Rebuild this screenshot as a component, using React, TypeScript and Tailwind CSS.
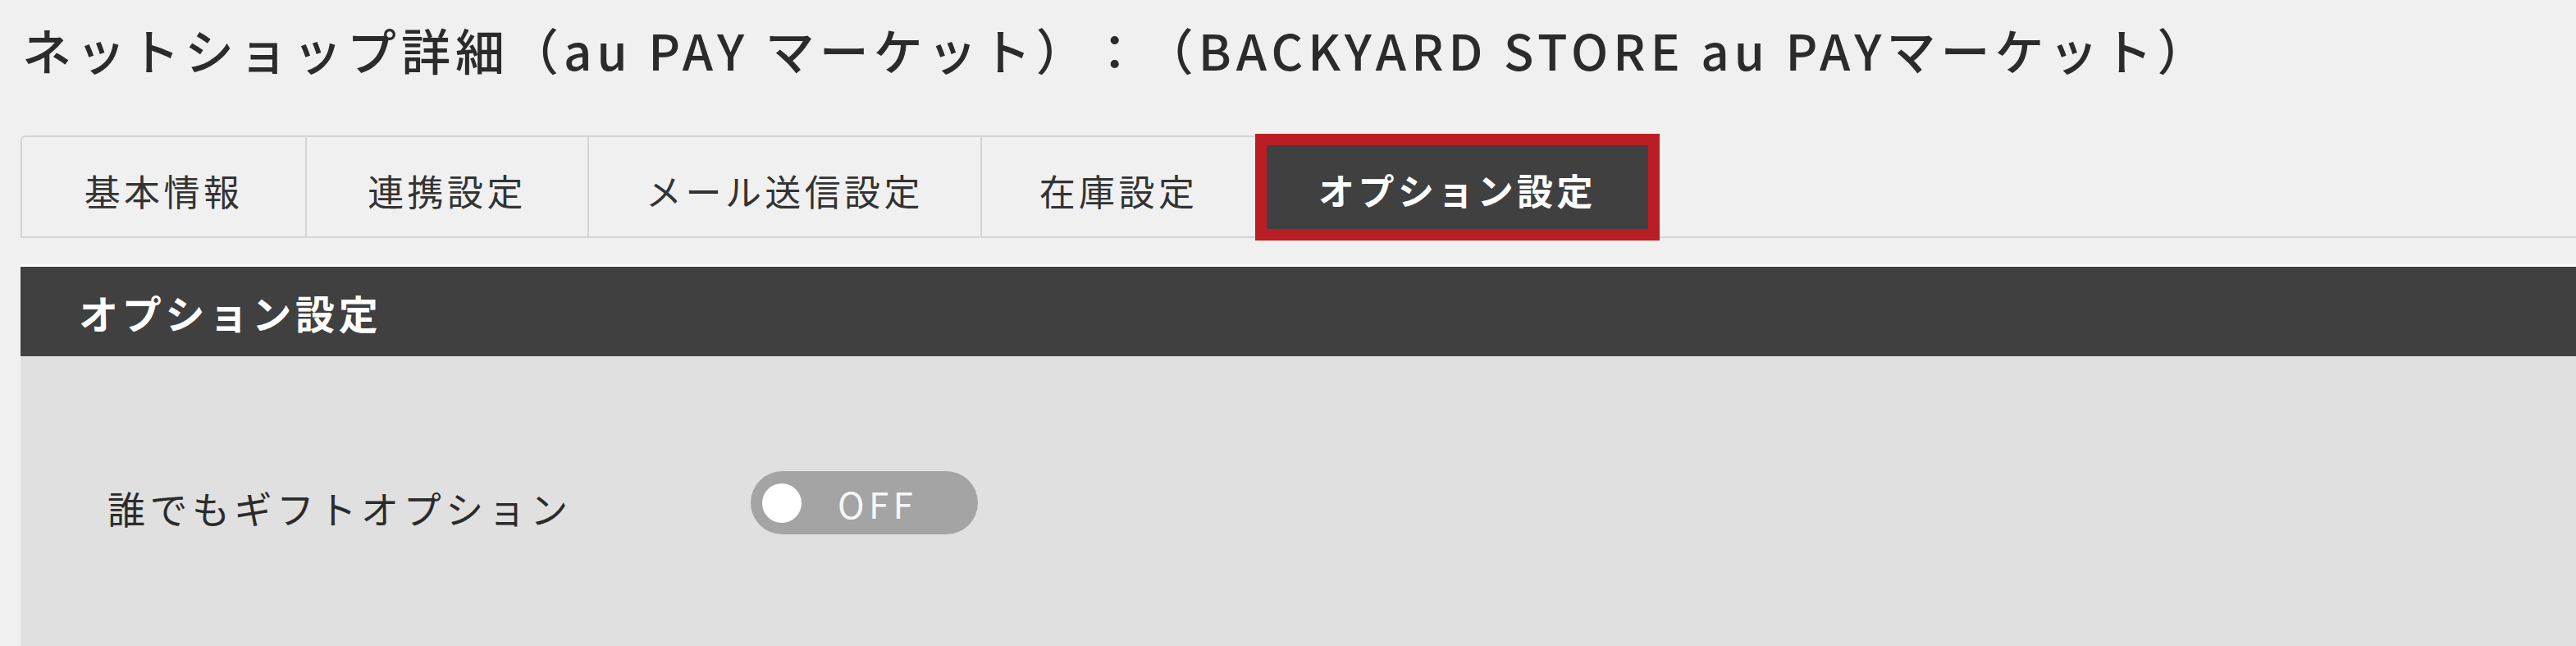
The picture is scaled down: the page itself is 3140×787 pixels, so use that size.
import React, { useState } from 'react';

const tabs = [
    { label: '基本情報', width: 'w-[347px]' },
    { label: '連携設定', width: 'w-[344px]' },
    { label: 'メール送信設定', width: 'w-[479px]' },
    { label: '在庫設定', width: 'w-[335px]' },
];

export default function App() {
    const [giftOn, setGiftOn] = useState(false);

    return (
        <div className="min-h-[787px] w-full overflow-hidden bg-[#f0f0f0] font-['Noto_Sans_CJK_JP','Noto_Sans',sans-serif] text-[#333333] [text-spacing-trim:space-all]">
            {/* Page title */}
            <h1 className="pt-[20px] pl-[27px] text-[60px] leading-[80px] font-medium tracking-[0.1em] whitespace-nowrap text-[#2b2b2b]">
                ネットショップ詳細（au PAY マーケット）：（BACKYARD STORE au PAYマーケット）
            </h1>

            {/* Tabs */}
            <div className="mt-[65px] ml-[25px] flex border-b-2 border-[#d4d4d4]">
                {tabs.map((tab, i) => (
                    <button
                        key={tab.label}
                        className={`${tab.width} h-[123px] flex items-center justify-center pt-[8px] border-t-2 border-l-2 border-[#d4d4d4] bg-[#f0f0f0] text-[44px] tracking-[0.1em] text-[#333333] ${i === 0 ? 'rounded-tl-[6px]' : ''}`}
                    >
                        {tab.label}
                    </button>
                ))}
                <button className="relative z-10 w-[493px] h-[130px] -mt-[2px] -mb-[5px] flex items-center justify-center pt-[6px] border-[14px] border-[#bb1d24] bg-[#404040] text-[44px] font-bold tracking-[0.1em] text-white">
                    オプション設定
                </button>
            </div>

            {/* Section header */}
            <div className="mt-[35px] ml-[25px] h-[109px] flex items-center pl-[71px] bg-[#404040] shadow-[0_-3px_0_#fbfbfb]">
                <h2 className="text-[48px] font-bold tracking-[0.1em] text-white">オプション設定</h2>
            </div>

            {/* Section body */}
            <div className="ml-[25px] min-h-[353px] bg-[#e0e0e0] pt-[138px] pl-[106px]">
                <div className="flex items-center">
                    <span className="w-[784px] pt-[12px] text-[46px] tracking-[0.12em] text-[#2b2b2b]">
                        誰でもギフトオプション
                    </span>
                    <button
                        onClick={() => setGiftOn(!giftOn)}
                        className="w-[277px] h-[77px] rounded-full bg-[#a4a4a4] flex items-center pl-[14px]"
                    >
                        <span className="w-[48px] h-[48px] rounded-full bg-white" />
                        <span className="ml-[44px] text-[44px] leading-none tracking-[0.12em] text-[#f7f7f7]">
                            {giftOn ? 'ON' : 'OFF'}
                        </span>
                    </button>
                </div>
            </div>
        </div>
    );
}
